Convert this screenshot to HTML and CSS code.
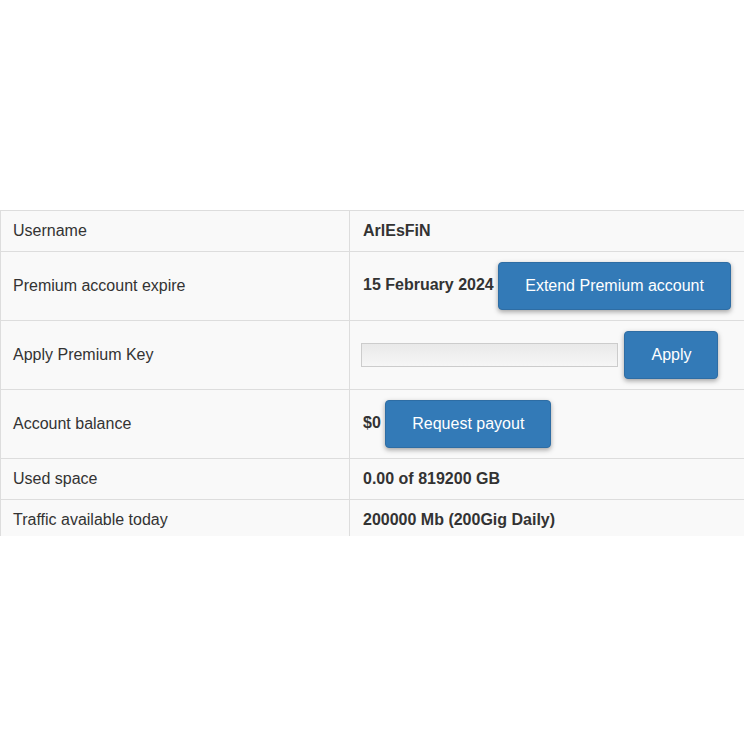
FILE: index.html
```html
<!DOCTYPE html>
<html lang="en">
<head>
    <meta charset="UTF-8">
    <meta name="viewport" content="width=device-width, initial-scale=1.0">
    <title>Account</title>
    <link rel="stylesheet" href="styles.css">
</head>
<body>
    <div class="page">
        <table class="account-table">
            <tr>
                <td class="label">Username</td>
                <td class="value">ArlEsFiN</td>
            </tr>
            <tr>
                <td class="label">Premium account expire</td>
                <td class="value">15 February 2024 <button class="btn">Extend Premium account</button></td>
            </tr>
            <tr>
                <td class="label">Apply Premium Key</td>
                <td class="value"><input type="text" class="key-input"> <button class="btn">Apply</button></td>
            </tr>
            <tr>
                <td class="label">Account balance</td>
                <td class="value">$0 <button class="btn">Request payout</button></td>
            </tr>
            <tr>
                <td class="label">Used space</td>
                <td class="value">0.00 of 819200 GB</td>
            </tr>
            <tr>
                <td class="label">Traffic available today</td>
                <td class="value">200000 Mb (200Gig Daily)</td>
            </tr>
        </table>
    </div>
</body>
</html>
```

FILE: styles.css
```css
/* Base */
* {
    box-sizing: border-box;
}

body {
    margin: 0;
    background-color: #fff;
    color: #333;
    font-family: 'Liberation Sans', Arial, sans-serif;
    font-size: 16px;
    overflow: hidden;
}

.page {
    margin-top: 210px;
    height: 326px;
    overflow: hidden;
}

.account-table {
    width: 780px;
    border-collapse: collapse;
    background-color: #f9f9f9;
}

.account-table td {
    border: 1px solid #ddd;
    padding: 10px 12px;
    line-height: 20px;
    vertical-align: middle;
}

.account-table .label {
    width: 349px;
}

.account-table .value {
    font-weight: bold;
    padding-left: 13px;
}

.btn {
    display: inline-block;
    vertical-align: middle;
    padding: 14px 26px;
    background-color: #337ab7;
    color: #fff;
    border: 1px solid #2e6da4;
    border-radius: 4px;
    font-family: 'Liberation Sans', Arial, sans-serif;
    font-size: 16px;
    line-height: 18px;
    font-weight: normal;
    box-shadow: 0 2px 5px rgba(0, 0, 0, 0.35);
    cursor: pointer;
}

.key-input {
    width: 257px;
    height: 24px;
    vertical-align: middle;
    border: 1px solid #ccc;
    background: linear-gradient(#e9e9e9, #f6f6f6);
    margin-left: -2px;
    margin-right: 2px;
}
```
